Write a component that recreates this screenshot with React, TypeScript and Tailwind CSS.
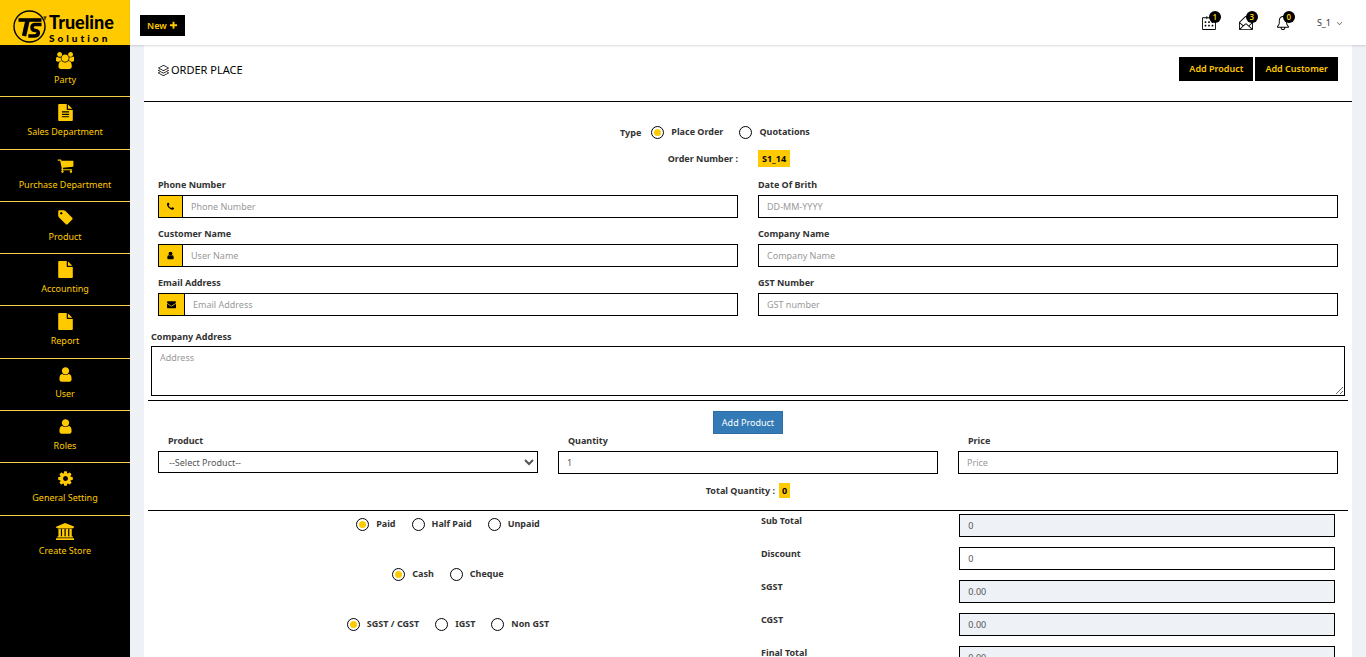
import { useState } from "react";
import type { ReactNode } from "react";
import { SlArrowDown, SlBell, SlCalender, SlEnvelopeOpen, SlLayers } from "react-icons/sl";

const ICONS = {
	users: {
		width: 1920,
		d: "M593 896q-162 5-265 128h-134q-82 0-138-40.5t-56-118.5q0-353 124-353 6 0 43.5 21t97.5 42.5 119 21.5q67 0 133-23-5 37-5 66 0 159 93 287zm1071 637q0 120-73 189.5t-194 69.5h-874q-121 0-194-69.5t-73-189.5q0-53 3.5-103.5t14-109 26.5-108.5 43-97.5 62-81 85.5-53.5 111.5-20q10 0 43 21.5t73 48 107 48 135 21.5 135-21.5 107-48 73-48 43-21.5q61 0 111.5 20t85.5 53.5 62 81 43 97.5 26.5 108.5 14 109 3.5 103.5zm-1024-1277q0 106-75 181t-181 75-181-75-75-181 75-181 181-75 181 75 75 181zm704 384q0 159-112.5 271.5t-271.5 112.5-271.5-112.5-112.5-271.5 112.5-271.5 271.5-112.5 271.5 112.5 112.5 271.5zm576 225q0 78-56 118.5t-138 40.5h-134q-103-123-265-128 93-128 93-287 0-29-5-66 66 23 133 23 59 0 119-21.5t97.5-42.5 43.5-21q124 0 124 353zm-128-609q0 106-75 181t-181 75-181-75-75-181 75-181 181-75 181 75 75 181z",
	},
	fileText: {
		width: 1792,
		d: "M1596 476q14 14 28 36h-472v-472q22 14 36 28zm-476 164h544v1056q0 40-28 68t-68 28h-1344q-40 0-68-28t-28-68v-1600q0-40 28-68t68-28h800v544q0 40 28 68t68 28zm160 736v-64q0-14-9-23t-23-9h-704q-14 0-23 9t-9 23v64q0 14 9 23t23 9h704q14 0 23-9t9-23zm0-256v-64q0-14-9-23t-23-9h-704q-14 0-23 9t-9 23v64q0 14 9 23t23 9h704q14 0 23-9t9-23zm0-256v-64q0-14-9-23t-23-9h-704q-14 0-23 9t-9 23v64q0 14 9 23t23 9h704q14 0 23-9t9-23z",
	},
	file: {
		width: 1792,
		d: "M1152 512v-472q22 14 36 28l408 408q14 14 28 36h-472zm-128 32q0 40 28 68t68 28h544v1056q0 40-28 68t-68 28h-1344q-40 0-68-28t-28-68v-1600q0-40 28-68t68-28h800v544z",
	},
	cart: {
		width: 1792,
		d: "M704 1536q0 52-38 90t-90 38-90-38-38-90 38-90 90-38 90 38 38 90zm896 0q0 52-38 90t-90 38-90-38-38-90 38-90 90-38 90 38 38 90zm128-1088v512q0 24-16.5 42.5t-40.5 21.5l-1044 122q13 60 13 70 0 16-24 64h920q26 0 45 19t19 45-19 45-45 19h-1024q-26 0-45-19t-19-45q0-11 8-31.5t16-36 21.5-40 15.5-29.5l-177-823h-204q-26 0-45-19t-19-45 19-45 45-19h256q16 0 28.5 6.5t19.5 15.5 13 24.5 8 26 5.5 29.5 4.5 26h1201q26 0 45 19t19 45z",
	},
	tag: {
		width: 1792,
		d: "M576 448q0-53-37.5-90.5t-90.5-37.5-90.5 37.5-37.5 90.5 37.5 90.5 90.5 37.5 90.5-37.5 37.5-90.5zm1067 576q0 53-37 90l-491 492q-39 37-91 37-53 0-90-37l-715-716q-38-37-64.5-101t-26.5-117v-416q0-52 38-90t90-38h416q53 0 117 26.5t102 64.5l715 714q37 39 37 91z",
	},
	user: {
		width: 1792,
		d: "M1536 1399q0 109-62.5 187t-150.5 78h-854q-88 0-150.5-78t-62.5-187q0-85 8.5-160.5t31.5-152 58.5-131 94-89 134.5-34.5q131 128 313 128t313-128q76 0 134.5 34.5t94 89 58.5 131 31.5 152 8.5 160.5zm-256-887q0 159-112.5 271.5t-271.5 112.5-271.5-112.5-112.5-271.5 112.5-271.5 271.5-112.5 271.5 112.5 112.5 271.5z",
	},
	cog: {
		width: 1792,
		d: "M1152 896q0-106-75-181t-181-75-181 75-75 181 75 181 181 75 181-75 75-181zm512-109v222q0 12-8 23t-20 13l-185 28q-19 54-39 91 35 50 107 138 10 12 10 25t-9 23q-27 37-99 108t-94 71q-12 0-26-9l-138-108q-44 23-91 38-16 136-29 186-7 28-36 28h-222q-14 0-24.5-8.5t-11.5-21.5l-28-184q-49-16-90-37l-141 107q-10 9-25 9-14 0-25-11-126-114-165-168-7-10-7-23 0-12 8-23 15-21 51-66.5t54-70.5q-27-50-41-99l-183-27q-13-2-21-12.5t-8-23.5v-222q0-12 8-23t19-13l186-28q14-46 39-92-40-57-107-138-10-12-10-24 0-10 9-23 26-36 98.5-107.5t94.5-71.5q13 0 26 10l138 107q44-23 91-38 16-136 29-186 7-28 36-28h222q14 0 24.5 8.5t11.5 21.5l28 184q49 16 90 37l142-107q9-9 24-9 13 0 25 10 129 119 165 170 7 8 7 22 0 12-8 23-15 21-51 66.5t-54 70.5q26 50 41 98l183 28q13 2 21 12.5t8 23.5z",
	},
	bank: {
		width: 1920,
		d: "M960 0l960 384v128h-128q0 26-20.5 45t-48.5 19h-1526q-28 0-48.5-19t-20.5-45h-128v-128zm-704 640h256v768h128v-768h256v768h128v-768h256v768h128v-768h256v768h59q28 0 48.5 19t20.5 45v64h-1664v-64q0-26 20.5-45t48.5-19h59v-768zm1595 960q28 0 48.5 19t20.5 45v128h-1920v-128q0-26 20.5-45t48.5-19h1782z",
	},
	plus: {
		width: 1792,
		d: "M1600 736v192q0 40-28 68t-68 28h-416v416q0 40-28 68t-68 28h-192q-40 0-68-28t-28-68v-416h-416q-40 0-68-28t-28-68v-192q0-40 28-68t68-28h416v-416q0-40 28-68t68-28h192q40 0 68 28t28 68v416h416q40 0 68 28t28 68z",
	},
	phone: {
		width: 1792,
		d: "M1600 1240q0 27-10 70.5t-21 68.5q-21 50-122 106-94 51-186 51-27 0-53-3.5t-57.5-12.5-47-14.5-55.5-20.5-49-18q-98-35-175-83-127-79-264-216t-216-264q-48-77-83-175-3-9-18-49t-20.5-55.5-14.5-47-12.5-57.5-3.5-53q0-92 51-186 56-101 106-122 25-11 68.5-21t70.5-10q14 0 21 3 18 6 53 76 11 19 30 54t35 63.5 31 53.5q3 4 17.5 25t21.5 35.5 7 28.5q0 20-28.5 50t-62 55-62 53-28.5 46q0 9 5 22.5t8.5 20.5 14 24 11.5 19q76 137 174 235t235 174q2 1 19 11.5t24 14 20.5 8.5 22.5 5q18 0 46-28.5t53-62 55-62 50-28.5q14 0 28.5 7t35.5 21.5 25 17.5q25 15 53.5 31t63.5 35 54 30q70 35 76 53 3 7 3 21z",
	},
	envelope: {
		width: 1792,
		d: "M1792 710v794q0 66-47 113t-113 47h-1472q-66 0-113-47t-47-113v-794q44 49 101 87 362 246 497 345 57 42 92.5 65.5t94.5 48 110 24.5h2q51 0 110-24.5t94.5-48 92.5-65.5q170-123 498-345 57-39 100-87zm0-294q0 79-49 151t-122 123q-376 261-468 325-10 7-42.5 31t-54 38.5-52 32.5-57.5 27-50 9h-2q-23 0-50-9t-57.5-27-52-32.5-54-38.5-42.5-31q-91-64-262-182.5t-205-142.5q-62-42-117-115.5t-55-136.5q0-78 41.5-130t118.5-52h1472q65 0 112.5 47t47.5 113z",
	},
};

type IconName = keyof typeof ICONS;

function Icon({ name, className }: { name: IconName; className: string }) {
	const icon = ICONS[name];
	return (
		<svg viewBox={`0 0 ${icon.width} 1792`} className={className} fill="currentColor" aria-hidden="true">
			<path d={icon.d} />
		</svg>
	);
}

const MENU: { label: string; icon: IconName }[] = [
	{ label: "Party", icon: "users" },
	{ label: "Sales Department", icon: "fileText" },
	{ label: "Purchase Department", icon: "cart" },
	{ label: "Product", icon: "tag" },
	{ label: "Accounting", icon: "file" },
	{ label: "Report", icon: "file" },
	{ label: "User", icon: "user" },
	{ label: "Roles", icon: "user" },
	{ label: "General Setting", icon: "cog" },
	{ label: "Create Store", icon: "bank" },
];

const INPUT = "block h-[23px] w-full min-w-0 border border-black px-2 text-[9px] text-[#555] placeholder:text-[#999] outline-none";
const LABEL = "block text-[9px] leading-[13px] font-bold text-[#333]";

function Logo() {
	return (
		<a href="#" className="flex h-[45px] shrink-0 items-center gap-px bg-[#ffcb00] pl-3 text-black" aria-label="Trueline Solution">
			<svg viewBox="0 0 36 36" className="mt-2 size-9 shrink-0" fill="none" stroke="currentColor">
				<circle cx="17.5" cy="17.5" r="15.5" strokeWidth="1.4" />
				<path d="M6.5 11h23" strokeWidth="3.6" />
				<path d="M15.5 11.5l-3.5 15.5" strokeWidth="4.4" />
				<path d="M29.5 15.5h-6q-3.5 0-3.5 2.9t3.5 3.2q3.2.3 2.8 2.8t-4 2.5h-6" strokeWidth="3.5" />
				<path d="M31.5 8h3M33 8v3" strokeWidth="1" />
			</svg>
			<span className="flex flex-col pt-2.5">
				<span className="font-['Lato',sans-serif] text-lg leading-5 font-black">Trueline</span>
				<span className="font-['Lato',sans-serif] text-[10px] leading-3 font-black tracking-[3px]">Solution</span>
			</span>
		</a>
	);
}

function Sidebar() {
	return (
		<aside className="flex w-[130px] shrink-0 flex-col bg-black">
			<Logo />
			<nav className="grid h-[523px] auto-rows-fr divide-y divide-[#f3cf4a]">
				{MENU.map((item) => (
					<a key={item.label} href="#" className="flex flex-col items-center gap-1 pt-[7px] text-[9px] leading-[13px] text-[#ffcb00] hover:bg-neutral-900">
						<Icon name={item.icon} className="h-[17px]" />
						{item.label}
					</a>
				))}
			</nav>
		</aside>
	);
}

function Notification({ label, count, children }: { label: string; count: number; children: ReactNode }) {
	return (
		<button type="button" aria-label={label} className="relative text-sm text-black">
			{children}
			<span className="absolute -top-[5px] -right-[5px] flex size-3 items-center justify-center rounded-full bg-black text-[8px] leading-none font-semibold text-[#ffcb00]">
				{count}
			</span>
		</button>
	);
}

function TopBar() {
	return (
		<header className="z-10 flex h-[45px] shrink-0 items-center justify-between bg-white pr-6 pl-2.5 shadow-[0_1px_2px_rgba(0,0,0,0.15)]">
			<button type="button" className="mt-1.5 flex h-[21px] items-center gap-0.5 bg-black px-[7px] text-[9px] font-semibold text-[#ffcb00]">
				New
				<Icon name="plus" className="size-[9px]" />
			</button>
			<div className="flex items-center gap-[23px] pt-px">
				<Notification label="Calendar" count={1}><SlCalender /></Notification>
				<Notification label="Messages" count={3}><SlEnvelopeOpen /></Notification>
				<Notification label="Alerts" count={0}><SlBell /></Notification>
				<button type="button" className="ml-1 flex items-center gap-1.5 text-[9px] text-[#333]">
					S_1
					<SlArrowDown className="size-[5px] stroke-[50]" />
				</button>
			</div>
		</header>
	);
}

interface FieldProps {
	id: string;
	label: string;
	placeholder?: string;
	defaultValue?: string;
	icon?: IconName;
	inset?: boolean;
}

function Field({ id, label, placeholder, defaultValue, icon, inset }: FieldProps) {
	return (
		<div>
			<label htmlFor={id} className={`${LABEL} ${inset ? "pl-2.5" : ""} mb-1`}>{label}</label>
			<div className="flex">
				{icon && (
					<span className={`flex shrink-0 items-center justify-center border border-r-0 border-black bg-[#ffcb00] text-black ${icon === "envelope" ? "w-[26px]" : "w-6"}`}>
						<Icon name={icon} className="size-[9px]" />
					</span>
				)}
				<input id={id} type="text" placeholder={placeholder} defaultValue={defaultValue} className={INPUT} />
			</div>
		</div>
	);
}

function RadioGroup({ name, options, legend }: { name: string; options: string[]; legend: string }) {
	const [value, setValue] = useState(options[0]);
	return (
		<div role="radiogroup" aria-label={legend} className="flex items-center justify-center gap-4">
			{options.map((option) => (
				<label key={option} className="flex items-center gap-[7px] text-[9px] leading-[14px] font-bold text-[#333]">
					<input
						type="radio"
						name={name}
						checked={value === option}
						onChange={() => setValue(option)}
						className="grid size-[13px] appearance-none place-items-center rounded-full border border-black before:size-[7px] before:rounded-full checked:before:bg-[#ffcb00]"
					/>
					{option}
				</label>
			))}
		</div>
	);
}

const TOTALS = [
	{ id: "sub-total", label: "Sub Total", value: "0", readOnly: true },
	{ id: "discount", label: "Discount", value: "0", readOnly: false },
	{ id: "sgst", label: "SGST", value: "0.00", readOnly: true },
	{ id: "cgst", label: "CGST", value: "0.00", readOnly: true },
	{ id: "final-total", label: "Final Total", value: "0.00", readOnly: true },
];

function OrderForm() {
	return (
		<form className="pb-6" onSubmit={(e) => e.preventDefault()}>
			<div className="flex items-center justify-center gap-2.5 pt-[23px] pr-[66px]">
				<span className={LABEL}>Type</span>
				<RadioGroup name="type" legend="Type" options={["Place Order", "Quotations"]} />
			</div>
			<div className="mt-[11px] grid grid-cols-2 items-center gap-5 px-3.5 text-[9px] font-bold text-[#333]">
				<span className="text-right">Order Number :</span>
				<span className="justify-self-start bg-[#ffcb00] px-1 leading-[17px] text-black">S1_14</span>
			</div>

			<div className="mt-[11px] grid grid-cols-2 gap-x-5 gap-y-[9px] px-3.5">
				<Field id="phone" label="Phone Number" placeholder="Phone Number" icon="phone" />
				<Field id="dob" label="Date Of Brith" placeholder="DD-MM-YYYY" />
				<Field id="customer" label="Customer Name" placeholder="User Name" icon="user" />
				<Field id="company" label="Company Name" placeholder="Company Name" />
				<Field id="email" label="Email Address" placeholder="Email Address" icon="envelope" />
				<Field id="gst" label="GST Number" placeholder="GST number" />
			</div>

			<div className="mx-1 border-b border-black px-[3px] pt-3.5 pb-1">
				<label htmlFor="address" className={`${LABEL} mb-[3px]`}>Company Address</label>
				<textarea
					id="address"
					placeholder="Address"
					className="block h-[50px] w-full border border-black px-2 py-1 text-[9px] leading-[13px] text-[#555] outline-none placeholder:text-[#999]"
				/>
			</div>

			<div className="mx-1 border-b border-black px-2.5 pt-2.5 pb-3">
				<button type="button" className="mx-auto block h-[23px] border border-[#2e6da4] bg-[#337ab7] px-2 text-[9px] text-white">
					Add Product
				</button>
				<div className="grid grid-cols-3 gap-5">
					<div>
						<label htmlFor="product" className={`${LABEL} mb-1 pl-2.5`}>Product</label>
						<select id="product" className="block h-[22px] w-full border border-black bg-white px-1.5 text-[9px] text-[#555] outline-none">
							<option>--Select Product--</option>
						</select>
					</div>
					<Field id="quantity" label="Quantity" defaultValue="1" inset />
					<Field id="price" label="Price" placeholder="Price" inset />
				</div>
				<div className="mt-[9px] flex items-center justify-center gap-1 text-[9px] leading-[15px] font-bold text-[#333]">
					Total Quantity :
					<span className="bg-[#ffcb00] px-[3px] text-black">0</span>
				</div>
			</div>

			<div className="mx-1 grid grid-cols-2">
				<div className="flex flex-col gap-9 pt-1.5">
					<RadioGroup name="payment" legend="Payment status" options={["Paid", "Half Paid", "Unpaid"]} />
					<RadioGroup name="method" legend="Payment method" options={["Cash", "Cheque"]} />
					<RadioGroup name="tax" legend="Tax type" options={["SGST / CGST", "IGST", "Non GST"]} />
				</div>
				<div className="flex flex-col gap-2.5 px-[13px] pt-[3px]">
					{TOTALS.map((total) => (
						<div key={total.id} className="grid grid-cols-3">
							<label htmlFor={total.id} className={LABEL}>{total.label}</label>
							<div className="col-span-2 pl-[7px]">
								<input
									id={total.id}
									type="text"
									readOnly={total.readOnly}
									defaultValue={total.value}
									className={`${INPUT} ${total.readOnly ? "bg-[#eef1f5]" : "bg-white"}`}
								/>
							</div>
						</div>
					))}
				</div>
			</div>
		</form>
	);
}

export default function App() {
	return (
		<div className="flex h-screen overflow-hidden bg-[#eef1f5] font-['Noto_Sans',sans-serif]">
			<Sidebar />
			<div className="flex min-w-0 flex-1 flex-col">
				<TopBar />
				<main className="min-h-0 flex-1 overflow-y-auto px-3.5 [scrollbar-width:none]">
					<section className="bg-white">
						<div className="flex h-[57px] items-start justify-between border-b border-black px-3.5 pt-3">
							<h1 className="flex items-center gap-0.5 pt-1 text-[11px] leading-[18px] text-black">
								<SlLayers className="size-[11px]" />
								ORDER PLACE
							</h1>
							<div className="flex gap-0.5">
								<button type="button" className="h-6 bg-black px-2.5 text-[9px] font-semibold text-[#ffcb00]">Add Product</button>
								<button type="button" className="h-6 bg-black px-2.5 text-[9px] font-semibold text-[#ffcb00]">Add Customer</button>
							</div>
						</div>
						<OrderForm />
					</section>
				</main>
			</div>
		</div>
	);
}
